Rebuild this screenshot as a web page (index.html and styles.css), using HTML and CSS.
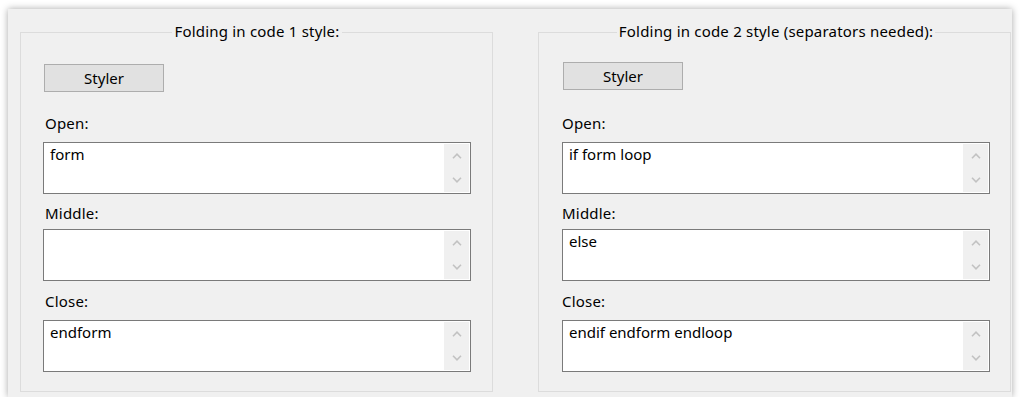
FILE: index.html
```html
<!DOCTYPE html>
<html lang="en">
<head>
  <meta charset="UTF-8">
  <title>Folding</title>
  <link rel="stylesheet" href="styles.css">
</head>
<body>

  <div class="window">

    <fieldset class="group">
      <legend>Folding in code 1 style:</legend>
      <button class="styler">Styler</button>

      <label class="cap cap-open">Open:</label>
      <div class="edit">
        <textarea>form</textarea>
        <div class="vscroll">
          <span class="arrow"><svg width="10" height="6" viewBox="0 0 10 6"><polyline points="1,5.2 5,1.2 9,5.2" /></svg></span>
          <span class="arrow"><svg width="10" height="6" viewBox="0 0 10 6"><polyline points="1,0.8 5,4.8 9,0.8" /></svg></span>
        </div>
      </div>

      <label class="cap cap-middle">Middle:</label>
      <div class="edit">
        <textarea></textarea>
        <div class="vscroll">
          <span class="arrow"><svg width="10" height="6" viewBox="0 0 10 6"><polyline points="1,5.2 5,1.2 9,5.2" /></svg></span>
          <span class="arrow"><svg width="10" height="6" viewBox="0 0 10 6"><polyline points="1,0.8 5,4.8 9,0.8" /></svg></span>
        </div>
      </div>

      <label class="cap cap-close">Close:</label>
      <div class="edit">
        <textarea>endform</textarea>
        <div class="vscroll">
          <span class="arrow"><svg width="10" height="6" viewBox="0 0 10 6"><polyline points="1,5.2 5,1.2 9,5.2" /></svg></span>
          <span class="arrow"><svg width="10" height="6" viewBox="0 0 10 6"><polyline points="1,0.8 5,4.8 9,0.8" /></svg></span>
        </div>
      </div>
    </fieldset>

    <fieldset class="group second">
      <legend>Folding in code 2 style (separators needed):</legend>
      <button class="styler">Styler</button>

      <label class="cap cap-open">Open:</label>
      <div class="edit">
        <textarea>if form loop</textarea>
        <div class="vscroll">
          <span class="arrow"><svg width="10" height="6" viewBox="0 0 10 6"><polyline points="1,5.2 5,1.2 9,5.2" /></svg></span>
          <span class="arrow"><svg width="10" height="6" viewBox="0 0 10 6"><polyline points="1,0.8 5,4.8 9,0.8" /></svg></span>
        </div>
      </div>

      <label class="cap cap-middle">Middle:</label>
      <div class="edit">
        <textarea>else</textarea>
        <div class="vscroll">
          <span class="arrow"><svg width="10" height="6" viewBox="0 0 10 6"><polyline points="1,5.2 5,1.2 9,5.2" /></svg></span>
          <span class="arrow"><svg width="10" height="6" viewBox="0 0 10 6"><polyline points="1,0.8 5,4.8 9,0.8" /></svg></span>
        </div>
      </div>

      <label class="cap cap-close">Close:</label>
      <div class="edit">
        <textarea>endif endform endloop</textarea>
        <div class="vscroll">
          <span class="arrow"><svg width="10" height="6" viewBox="0 0 10 6"><polyline points="1,5.2 5,1.2 9,5.2" /></svg></span>
          <span class="arrow"><svg width="10" height="6" viewBox="0 0 10 6"><polyline points="1,0.8 5,4.8 9,0.8" /></svg></span>
        </div>
      </div>
    </fieldset>

  </div>

</body>
</html>
```

FILE: styles.css
```css
body {
  margin: 0;
  background: #fff;
  font-family: 'Noto Sans', 'Open Sans', sans-serif;
  font-size: 15px;
  letter-spacing: 0.2px;
  color: #000;
}

.window {
  margin: 9px 0 0 8px;
  width: 1004px;
  height: 388px;
  box-sizing: border-box;
  padding-left: 12px;
  background: #f0f0f0;
  box-shadow: 0 0 7px rgba(0,0,0,0.35);
  display: flex;
  gap: 45px;
}

.group {
  box-sizing: border-box;
  width: 473px;
  height: 371px;
  margin: 12px 0 0;
  padding: 21px 21px 0 22px;
  border: 1px solid #dcdcdc;
  display: flex;
  flex-direction: column;
  align-items: flex-start;
  min-width: 0;
}

.group.second {
  padding-left: 23px;
  padding-right: 20px;
}

.group legend {
  margin: 0 auto;
  padding: 0 2px 2px;
  line-height: 20px;
}

.styler {
  width: 120px;
  height: 28px;
  margin: 0 0 0 1px;
  padding: 0;
  border: 1px solid #adadad;
  background: #e1e1e1;
  font: inherit;
  color: #000;
}

.second .styler {
  margin-top: -2px;
  margin-bottom: 2px;
}

.cap {
  display: block;
  line-height: 20px;
}
.cap-open { margin: 21px 0 9px 2px; }
.cap-middle { margin: 9px 0 6px 2px; }
.cap-close { margin: 10px 0 9px 2px; }
.second .cap { margin-left: 0; }

.edit {
  box-sizing: border-box;
  width: 428px;
  height: 52px;
  flex: none;
  border: 1px solid #7a7a7a;
  padding: 1px;
  background: #fff;
  display: flex;
}

.edit textarea {
  flex: 1;
  border: none;
  outline: none;
  resize: none;
  overflow: hidden;
  margin: 0;
  padding: 0 5px;
  font: inherit;
  line-height: 20px;
  color: #000;
  background: transparent;
}

.vscroll {
  width: 25px;
  background: #f0f0f0;
  display: flex;
  flex-direction: column;
}

.arrow {
  flex: 1;
  display: flex;
  align-items: center;
  justify-content: center;
}

.arrow svg polyline {
  fill: none;
  stroke: #c2c2c2;
  stroke-width: 1.6;
}
```
